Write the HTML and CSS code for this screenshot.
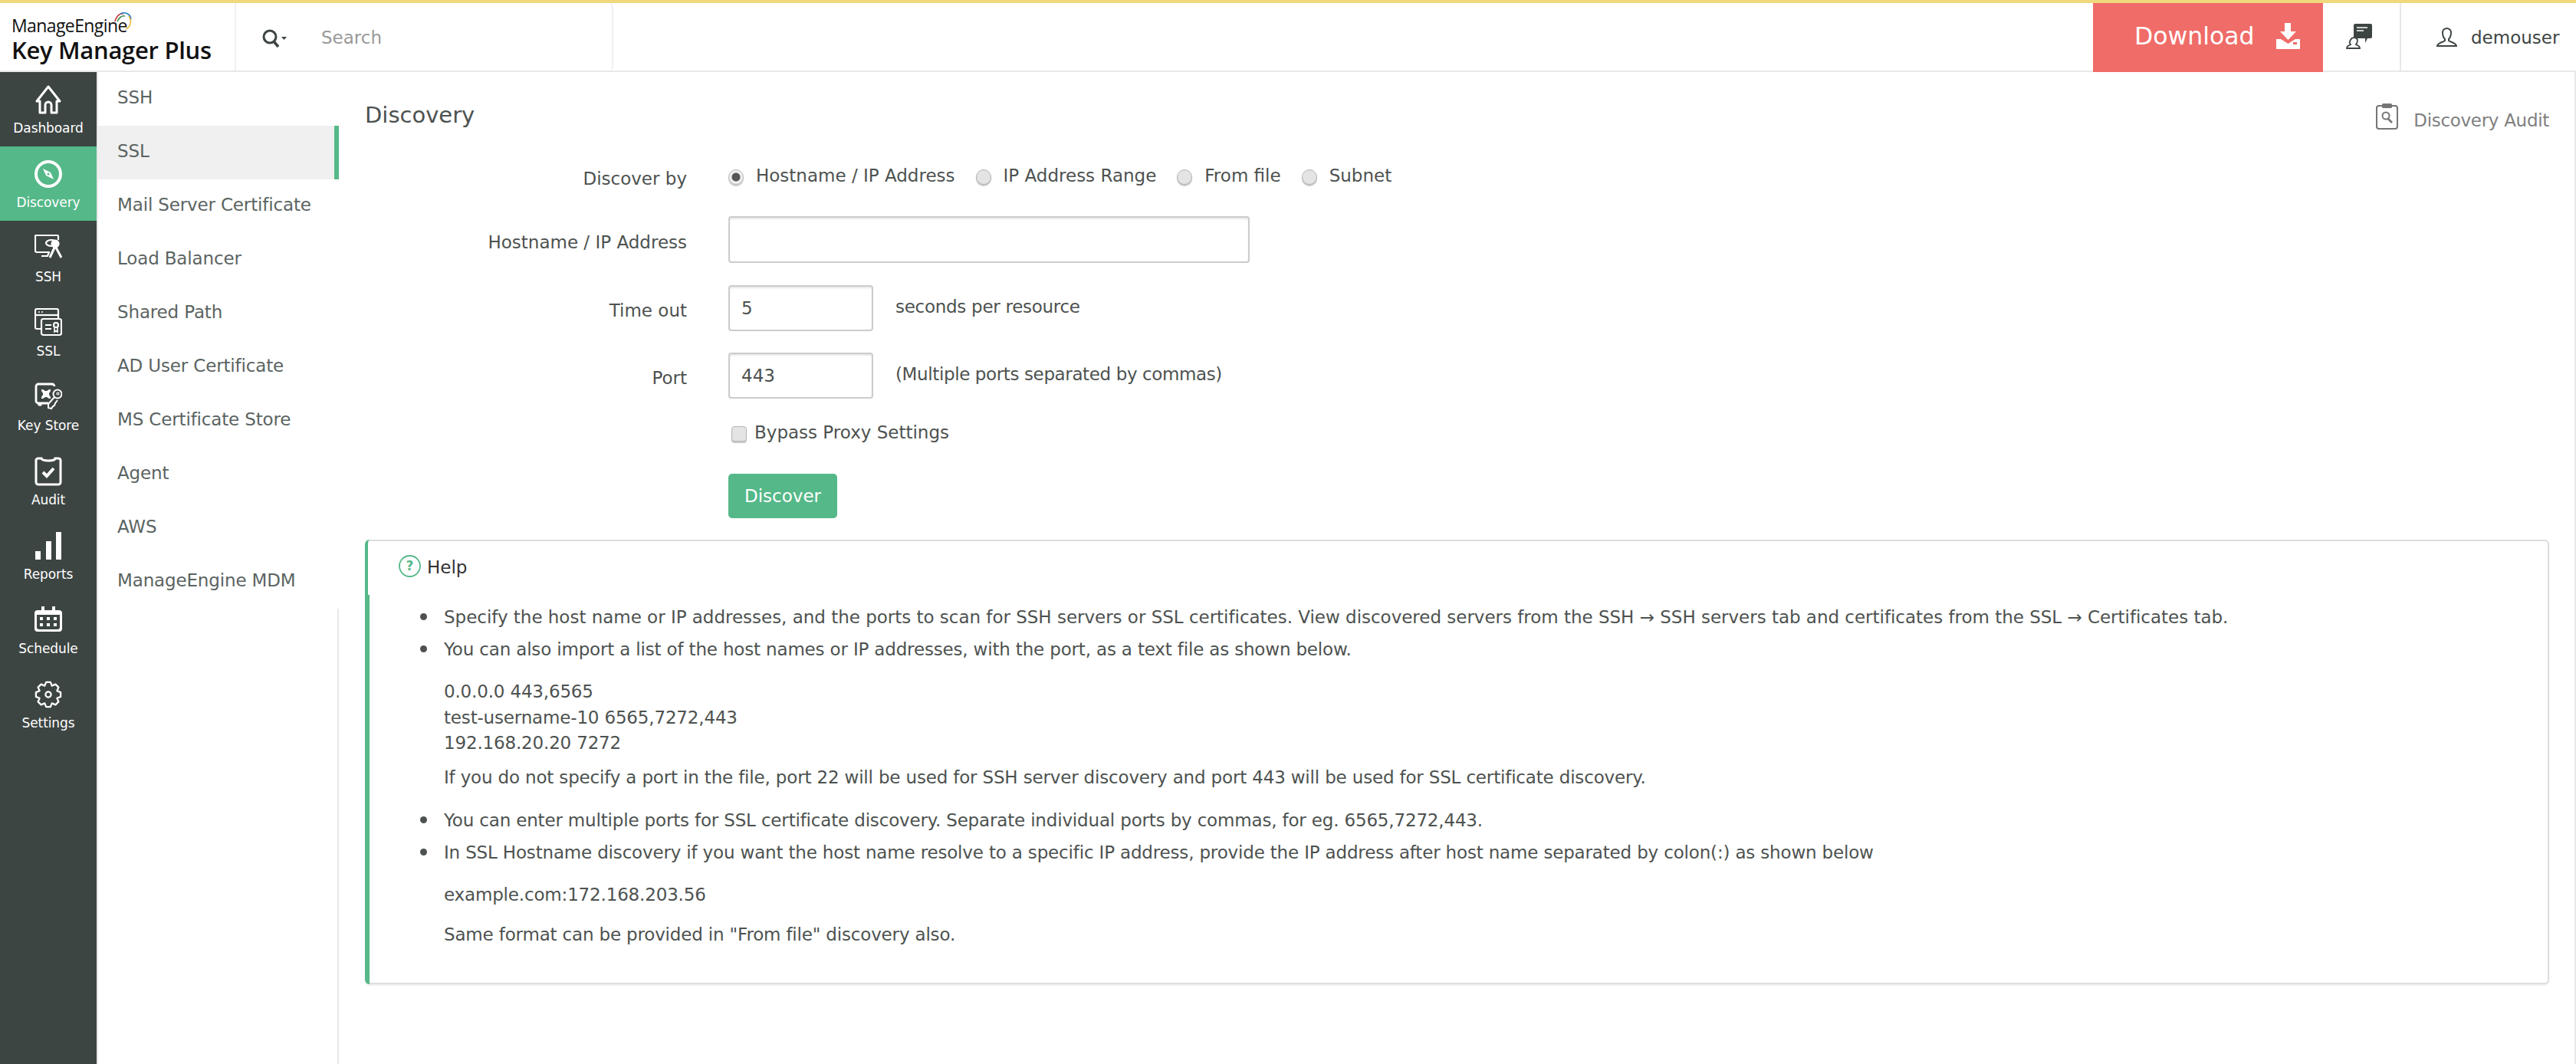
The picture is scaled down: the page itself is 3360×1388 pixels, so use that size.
FILE: index.html
```html
<!DOCTYPE html>
<html lang="en">
<head>
<meta charset="utf-8">
<title>Key Manager Plus - Discovery</title>
<link rel="stylesheet" href="styles.css">
</head>
<body>
<header class="topbar">
  <div class="brand">
    <div class="brand-top">ManageEngine</div>
    <svg class="brand-arc" viewBox="0 0 24 24" fill="none" stroke-width="1.6"><path d="M1 13C3 5 8 2 12 3" stroke="#c8323c"/><path d="M4 13C6 8 10 5 14 6" stroke="#3a8f4a"/><path d="M8 3C14 0 21 3 22 10" stroke="#2a7fc0"/><path d="M19 6C23 12 22 20 15 23" stroke="#eab83a"/></svg>
    <div class="brand-name">Key Manager Plus</div>
  </div>
  <div class="searchbox">
    <svg class="search-icon" viewBox="0 0 34 26" fill="none" stroke="#3d4543"><circle cx="11" cy="10" r="8" stroke-width="3"/><path d="M16 16l6 7" stroke-width="3.5"/><path d="M26 10h7l-3.500 4z" fill="#3d4543" stroke="none"/></svg>
    <span class="search-text">Search</span>
  </div>
  <div class="top-spacer"></div>
  <a class="download">Download
    <svg class="download-icon" viewBox="0 0 31 34" fill="#fff"><path d="M11 0h8v11h7L15.500 22 5 11h6z"/><path d="M0 21h6l9.500 6 9.500-6h6v13H0z"/><rect x="22" y="25" width="5" height="3" fill="#f06c68"/></svg>
  </a>
  <div class="top-chat">
    <svg viewBox="0 0 34 34" class="chat-icon"><path d="M12 1h20a2 2 0 0 1 2 2v15a2 2 0 0 1-2 2h-4l-3 6v-6H12a2 2 0 0 1-2-2V3a2 2 0 0 1 2-2z" fill="#3d4543"/><path d="M14 6h14M14 10h9" stroke="#fff" stroke-width="1.600"/><path d="M6 22a5 5 0 0 1 9 0c0 3-1 5-2 6 1 1 5 1 5 5H1c0-4 4-4 5-5-1-1-2-3 0-6z" fill="#fff" stroke="#3d4543" stroke-width="1.800"/></svg>
  </div>
  <div class="top-user">
    <svg viewBox="0 0 27 25" class="user-icon" fill="none" stroke="#3d4543" stroke-width="2"><path d="M8 6a5.500 5 0 0 1 11 0c0 4-1 7-3 9v2c1 2 9 2 10 7H1c1-5 9-5 10-7v-2C9 13 8 10 8 6z"/></svg>
    <span>demouser</span>
  </div>
</header>

<div class="shell">
  <nav class="rail">
    <a class="rail-item">
      <svg class="rail-icon" viewBox="0 0 36 38" fill="none" stroke="#fff" stroke-width="3" stroke-linejoin="round"><path d="M18 2 33 21h-4v15h-7V26a4 4 0 0 0-8 0v10H7V21H3z"/></svg>
      <span>Dashboard</span>
    </a>
    <a class="rail-item is-active">
      <svg class="rail-icon" viewBox="0 0 36 38" fill="none"><circle cx="18" cy="19" r="16" stroke="#fff" stroke-width="4"/><path d="M11 12l10 5 4 9-10-5z" fill="#fff"/><circle cx="18" cy="19" r="1.500" fill="#55b889"/></svg>
      <span>Discovery</span>
    </a>
    <a class="rail-item">
      <svg class="rail-icon" viewBox="0 0 36 38" fill="none" stroke="#fff" stroke-width="2.200"><path d="M20 24H3a2 2 0 0 1-2-2V3a1 1 0 0 1 1-1h28a1 1 0 0 1 1 1v5"/><path d="M9 29h8l2-5"/><ellipse cx="22" cy="12" rx="7" ry="4"/><circle cx="27" cy="13" r="4.500" fill="#fff"/><path d="M27 16l-7 15M27 16l8 15" stroke-width="3"/></svg>
      <span>SSH</span>
    </a>
    <a class="rail-item">
      <svg class="rail-icon" viewBox="0 0 36 38" fill="none" stroke="#fff" stroke-width="2.200"><path d="M8 27H3a2 2 0 0 1-2-2V3a2 2 0 0 1 2-2h26a2 2 0 0 1 2 2v10"/><path d="M1 9h30" /><path d="M5 5h2M9 5h2" stroke-width="1.500"/><rect x="9" y="14" width="26" height="21" rx="2.500"/><path d="M14 22h8M14 27h8"/><circle cx="28" cy="22" r="3"/><path d="M26 25v6l2-1.500 2 1.500v-6" stroke-width="1.600"/></svg>
      <span>SSL</span>
    </a>
    <a class="rail-item">
      <svg class="rail-icon" viewBox="0 0 36 38" fill="none" stroke="#fff" stroke-width="2.800"><path d="M26 5a3 3 0 0 0-3-3H5a3 3 0 0 0-3 3v19a3 3 0 0 0 3 3h13"/><path d="M5 28h4v2H5z" fill="#fff" stroke-width="1"/><path d="M9 9h2l3 2h2l3-2h2v2l-2 3v2l2 3v2h-2l-3-2h-2l-3 2H9v-2l2-3v-2L9 11z" fill="#fff" stroke="none"/><circle cx="30" cy="15" r="5.500" stroke-width="2"/><circle cx="30.500" cy="14.500" r="1.500" stroke-width="1.200"/><path d="M26 19l-8 9 0 5 4 1 2-3 2-1 1-3 3-4" stroke-width="2"/></svg>
      <span>Key Store</span>
    </a>
    <a class="rail-item">
      <svg class="rail-icon" viewBox="0 0 36 38" fill="none" stroke="#fff" stroke-width="3"><path d="M9 2H5a3 3 0 0 0-3 2v29a3 3 0 0 0 3 3h26a3 3 0 0 0 3-3V4a3 3 0 0 0-3-2h-4a9 3 0 0 1-18 0z"/><path d="M11 20l5 5 9-10" stroke-width="4"/></svg>
      <span>Audit</span>
    </a>
    <a class="rail-item">
      <svg class="rail-icon" viewBox="0 0 36 38" fill="#fff"><rect x="1" y="26" width="7" height="11"/><rect x="15" y="13" width="7" height="24"/><rect x="28" y="1" width="7" height="36"/></svg>
      <span>Reports</span>
    </a>
    <a class="rail-item">
      <svg class="rail-icon" viewBox="0 0 36 38" fill="#fff"><path d="M4 6h5V1h4v5h10V1h4v5h5a4 4 0 0 1 4 3v21a4 4 0 0 1-4 4H4a4 4 0 0 1-4-4V9a4 4 0 0 1 4-3z"/><path d="M3 12h30v16a3 3 0 0 1-3 3H6a3 3 0 0 1-3-3z" fill="#3d4543"/><path d="M7 15h4v4H7zM16 15h4v4h-4zM25 15h4v4h-4zM7 23h4v4H7zM16 23h4v4h-4zM25 23h4v4h-4z"/></svg>
      <span>Schedule</span>
    </a>
    <a class="rail-item">
      <svg class="rail-icon" viewBox="-19 -19 38 38" fill="none" stroke="#fff" stroke-width="2.400" stroke-linejoin="round"><polygon points="-5,-12 -3,-17 3,-17 5,-12 9.900,-14.140 14.140,-9.900 12,-5 17,-3 17,3 12,5 14.140,9.900 9.900,14.140 5,12 3,17 -3,17 -5,12 -9.900,14.140 -14.140,9.900 -12,5 -17,3 -17,-3 -12,-5 -14.140,-9.900 -9.900,-14.140"/><circle r="3.800"/></svg>
      <span>Settings</span>
    </a>
  </nav>

  <aside class="subnav">
    <ul class="subnav-list">
      <li>SSH</li>
      <li class="is-active">SSL</li>
      <li>Mail Server Certificate</li>
      <li>Load Balancer</li>
      <li>Shared Path</li>
      <li>AD User Certificate</li>
      <li>MS Certificate Store</li>
      <li>Agent</li>
      <li>AWS</li>
      <li>ManageEngine MDM</li>
    </ul>
    <div class="subnav-fill"></div>
  </aside>

  <main class="content">
    <div class="page-head">
      <h1>Discovery</h1>
      <a class="audit-link">
        <svg viewBox="0 0 29 34" class="audit-icon" fill="none" stroke="#757575" stroke-width="2"><rect x="1" y="3" width="27" height="30" rx="3"/><rect x="8" y="0" width="13" height="6" rx="1.500" fill="#757575" stroke="none"/><circle cx="13" cy="16" r="4.500"/><path d="M16 20l5 5" stroke-width="2.600"/></svg>
        <span>Discovery Audit</span>
      </a>
    </div>

    <form class="disc-form">
      <div class="form-row row-radio">
        <label class="form-label">Discover by</label>
        <div class="radios">
          <label class="opt"><input type="radio" name="by" checked><span>Hostname / IP Address</span></label>
          <label class="opt"><input type="radio" name="by"><span>IP Address Range</span></label>
          <label class="opt"><input type="radio" name="by"><span>From file</span></label>
          <label class="opt"><input type="radio" name="by"><span>Subnet</span></label>
        </div>
      </div>
      <div class="form-row row-host">
        <label class="form-label">Hostname / IP Address</label>
        <input class="field field-wide" type="text">
      </div>
      <div class="form-row">
        <label class="form-label">Time out</label>
        <input class="field field-small" type="text" value="5">
        <span class="hint">seconds per resource</span>
      </div>
      <div class="form-row row-port">
        <label class="form-label">Port</label>
        <input class="field field-small" type="text" value="443">
        <span class="hint hint-long">(Multiple ports separated by commas)</span>
      </div>
      <div class="form-row row-check">
        <span class="form-label"></span>
        <label class="opt opt-check"><input type="checkbox"><span>Bypass Proxy Settings</span></label>
      </div>
      <div class="form-row row-btn">
        <span class="form-label"></span>
        <button class="btn" type="button">Discover</button>
      </div>
    </form>

    <section class="help">
      <div class="help-head">
        <svg viewBox="0 0 29 29" class="help-icon" fill="none"><circle cx="14.500" cy="14.500" r="13.500" stroke="#55b889" stroke-width="1.800"/><text x="14.500" y="20" text-anchor="middle" class="help-q">?</text></svg>
        <span>Help</span>
      </div>
      <div class="help-body">
        <ul>
          <li class="li-first">Specify the host name or IP addresses, and the ports to scan for SSH servers or SSL certificates. View discovered servers from the SSH → SSH servers tab and certificates from the SSL → Certificates tab.</li>
          <li>You can also import a list of the host names or IP addresses, with the port, as a text file as shown below.
            <p class="sample">0.0.0.0 443,6565<br>test-username-10 6565,7272,443<br>192.168.20.20 7272</p>
            <p class="note">If you do not specify a port in the file, port 22 will be used for SSH server discovery and port 443 will be used for SSL certificate discovery.</p>
          </li>
          <li class="li-enter">You can enter multiple ports for SSL certificate discovery. Separate individual ports by commas, for eg. 6565,7272,443.</li>
          <li>In SSL Hostname discovery if you want the host name resolve to a specific IP address, provide the IP address after host name separated by colon(:) as shown below
            <p class="example">example.com:172.168.203.56</p>
            <p class="same">Same format can be provided in "From file" discovery also.</p>
          </li>
        </ul>
      </div>
    </section>
  </main>
</div>
</body>
</html>
```

FILE: styles.css
```css
* { box-sizing: border-box; }
html, body { height: 100%; }
body {
  margin: 0;
  background: #fff;
  color: #4d5250;
  font-family: "DejaVu Sans", "Liberation Sans", sans-serif;
  font-size: 23px;
  overflow: hidden;
  display: flex;
  flex-direction: column;
}

/* top bar */
.topbar {
  height: 94px;
  flex: none;
  display: flex;
  align-items: stretch;
  border-top: 4px solid #f0d97c;
  border-bottom: 2px solid #e8e8e8;
}
.brand {
  width: 308px;
  padding: 16px 0 0 15px;
  border-right: 2px solid #f0f0f0;
  position: relative;
  color: #111;
  font-family: "Open Sans", sans-serif;
}
.brand-top { font-size: 23px; line-height: 26px; letter-spacing: -0.6px; }
.brand-name { font-size: 31px; line-height: 38px; font-weight: 600; letter-spacing: -0.3px; }
.brand-arc { position: absolute; left: 149px; top: 11px; width: 24px; height: 24px; }
.searchbox {
  width: 492px;
  display: flex;
  align-items: center;
  padding: 2px 0 0 33px;
  border-right: 2px solid #f0f0f0;
  border-bottom-right-radius: 6px;
  border-top-right-radius: 6px;
}
.search-icon { width: 34px; height: 26px; margin-top: 4px; }
.search-text { margin-left: 44px; font-size: 23px; color: #999; }
.top-spacer { flex: 1; }
.download {
  width: 300px;
  margin-bottom: -2px;
  padding: 0 30px 4px 54px;
  background: #f06c68;
  color: #fff;
  font-size: 31.5px;
  display: flex;
  align-items: center;
  justify-content: space-between;
}
.download-icon { width: 31px; height: 34px; }
.top-chat {
  width: 102px;
  padding-left: 30px;
  display: flex;
  align-items: center;
  border-right: 2px solid #e8e8e8;
}
.chat-icon { width: 34px; height: 34px; margin-bottom: 2px; }
.top-user {
  flex: none;
  width: 228px;
  padding: 2px 0 0 46px;
  display: flex;
  align-items: center;
  gap: 18px;
  color: #3d4543;
}
.user-icon { width: 27px; height: 25px; margin-bottom: 2px; }

/* layout */
.shell { flex: 1; display: flex; min-height: 0; }

/* icon rail */
.rail {
  width: 128px;
  flex: none;
  background: #3d4543;
  border-right: 2px solid #e8e8e8;
}
.rail-item {
  height: 97px;
  padding-top: 17px;
  display: flex;
  flex-direction: column;
  align-items: center;
  color: #fff;
  font-size: 17px;
  letter-spacing: -0.1px;
}
.rail-item span { margin-top: 7px; line-height: 22px; }
.rail-item.is-active { background: #55b889; }
.rail-icon { width: 36px; height: 38px; }

/* sub navigation */
.subnav { width: 314px; flex: none; display: flex; flex-direction: column; }
.subnav-list { list-style: none; margin: 0; padding: 0; }
.subnav-list li {
  height: 70px;
  line-height: 67px;
  padding-left: 25px;
  color: #5b6462;
  font-size: 23px;
  letter-spacing: -0.15px;
}
.subnav-list li.is-active {
  background: #f0f0f0;
  border-right: 6px solid #55b889;
}
.subnav-fill { flex: 1; border-right: 2px solid #e8e8e8; }

/* content */
.content {
  flex: 1;
  min-width: 0;
  padding: 0 33px 0 34px;
  border-right: 2px solid #e8e8e8;
}
.page-head {
  display: flex;
  justify-content: space-between;
  align-items: flex-start;
  height: 113px;
}
.page-head h1 {
  margin: 36px 0 0;
  font-size: 29px;
  line-height: 40px;
  font-weight: 400;
  color: #4d5250;
}
.audit-link {
  margin-top: 41px;
  display: flex;
  align-items: center;
  gap: 20px;
  color: #808080;
  letter-spacing: -0.3px;
}
.audit-icon { width: 29px; height: 34px; margin-bottom: 9px; }

/* form */
.disc-form { display: flex; flex-direction: column; gap: 29px; }
.form-row { display: flex; align-items: center; }
.form-label {
  width: 420px;
  flex: none;
  margin-right: 54px;
  padding-top: 6px;
  text-align: right;
}
.row-radio { height: 46px; }
.row-host { height: 61px; }
.row-port { margin-top: -1px; }
.row-check { height: 30px; }
.row-btn { height: 58px; margin-top: 10px; }
.radios { display: flex; align-items: center; gap: 27px; margin-top: -3px; }
.opt { display: flex; align-items: center; gap: 16px; }
.opt input {
  appearance: none;
  width: 20px;
  height: 20px;
  margin: 0;
  flex: none;
  background: #e4e4e4;
  border: 1px solid #b5b5b5;
  border-radius: 50%;
  box-shadow: 0 2px 1px #c8c8c8;
  position: relative;
  top: 2px;
}
.opt input:checked {
  background: radial-gradient(circle, #555 0 5px, #eee 6px);
}
.opt-check { margin-left: 4px; gap: 10px; }
.opt-check input { border-radius: 4px; }
.field {
  height: 60px;
  margin: 0;
  padding: 0 15px;
  border: 2px solid #ccc;
  border-radius: 4px;
  box-shadow: inset 0 2px 2px #e8e8e8;
  font: inherit;
  color: #4d5250;
  outline: none;
}
.field-wide { width: 680px; height: 61px; }
.field-small { width: 189px; }
.hint { margin-left: 29px; margin-top: -4px; letter-spacing: -0.28px; }
.hint-long { letter-spacing: -0.38px; }
.btn {
  width: 142px;
  height: 58px;
  padding: 0;
  border: 0;
  border-radius: 5px;
  background: #55b889;
  color: #fff;
  font: inherit;
}

/* help */
.help {
  margin-top: 28px;
  height: 580px;
  border: 2px solid #ddd;
  border-left: 0;
  border-radius: 6px;
  box-shadow: 0 2px 2px #f0f0f0;
}
.help-head {
  height: 72px;
  border-left: 4px solid #55b889;
  border-top-left-radius: 6px;
  padding: 20px 0 0 40px;
  margin-top: -2px;
  display: flex;
  align-items: flex-start;
  gap: 8px;
  color: #333;
}
.help-head span { line-height: 32px; }
.help-icon { width: 29px; height: 29px; }
.help-q { font-size: 17px; font-weight: 700; fill: #55b889; }
.help-body {
  height: 508px;
  border-left: 6px solid #55b889;
  border-bottom-left-radius: 6px;
  padding-top: 12px;
  letter-spacing: -0.17px;
}
.help-body ul { list-style: none; margin: 0; padding: 0 0 0 97px; }
.help-body li { position: relative; line-height: 34px; margin-bottom: 8px; }
.help-body li::before {
  content: "";
  position: absolute;
  left: -31px;
  top: 12px;
  width: 9px;
  height: 9px;
  border-radius: 50%;
  background: #4d5250;
}
.help-body .li-first { letter-spacing: -0.02px; }
.sample { margin: 22px 0 0; line-height: 33.5px; }
.note { margin: 10px 0 0; }
.help-body .li-enter { margin-top: 22px; }
.example { margin: 21px 0 0; }
.same { margin: 18px 0 0; }
```
